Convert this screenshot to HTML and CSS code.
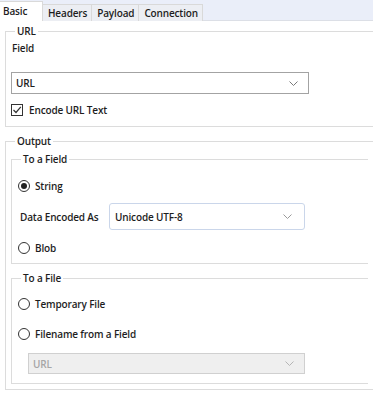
FILE: index.html
```html
<!DOCTYPE html>
<html lang="en">
<head>
    <meta charset="UTF-8">
    <title>Download Tool - Basic</title>
    <link rel="stylesheet" href="styles.css">
</head>
<body>
    <!-- Tabs -->
    <div class="tabs">
        <div class="tab active">Basic</div>
        <div class="tab">Headers</div>
        <div class="tab">Payload</div>
        <div class="tab">Connection</div>
    </div>

    <div class="panel">
        <!-- URL -->
        <fieldset class="group url-group">
            <legend>URL</legend>
            <div class="label">Field</div>
            <div class="select url-select">
                <span>URL</span>
                <svg class="chev" width="9" height="5" viewBox="0 0 9 5"><path d="M0.5 0.5 L4.5 4.5 L8.5 0.5" fill="none" stroke="#7a7a7a" stroke-width="1"/></svg>
            </div>
            <div class="check-row">
                <span class="checkbox">
                    <svg width="10" height="10" viewBox="0 0 10 10"><path d="M1.5 5 L4 7.5 L8.8 1.8" fill="none" stroke="#333" stroke-width="1.2"/></svg>
                </span>
                <span>Encode URL Text</span>
            </div>
        </fieldset>

        <!-- Output -->
        <fieldset class="group output-group">
            <legend>Output</legend>

            <fieldset class="group sub field-group">
                <legend>To a Field</legend>
                <div class="radio-row first"><span class="radio checked"></span>String</div>
                <div class="enc-row">
                    <span class="enc-label">Data Encoded As</span>
                    <div class="select enc-select">
                        <span>Unicode UTF-8</span>
                        <svg class="chev" width="9" height="5" viewBox="0 0 9 5"><path d="M0.5 0.5 L4.5 4.5 L8.5 0.5" fill="none" stroke="#9a9a9a" stroke-width="1"/></svg>
                    </div>
                </div>
                <div class="radio-row blob"><span class="radio"></span>Blob</div>
            </fieldset>

            <fieldset class="group sub file-group">
                <legend>To a File</legend>
                <div class="radio-row first"><span class="radio"></span>Temporary File</div>
                <div class="radio-row second"><span class="radio"></span>Filename from a Field</div>
                <div class="select file-select disabled">
                    <span>URL</span>
                    <svg class="chev" width="9" height="5" viewBox="0 0 9 5"><path d="M0.5 0.5 L4.5 4.5 L8.5 0.5" fill="none" stroke="#b5b5b5" stroke-width="1"/></svg>
                </div>
            </fieldset>
        </fieldset>
    </div>
</body>
</html>
```

FILE: styles.css
```css
/* Base */
html, body {
    margin: 0;
    padding: 0;
    overflow: hidden;
    background: #fff;
}

body {
    font-family: "Open Sans", "Noto Sans", sans-serif;
    font-weight: 600;
    font-size: 10px;
    letter-spacing: -0.15px;
    color: #1e1e1e;
    width: 373px;
    height: 400px;
}

/* Tabs */
.tabs {
    display: flex;
    align-items: flex-end;
    height: 21px;
    box-sizing: border-box;
    background-color: #eaeef9;
    border-bottom: 1px solid #dcdfe6;
}

.tab {
    height: 17px;
    line-height: 16px;
    box-sizing: border-box;
    padding: 0 4px 0 5px;
    margin-bottom: -1px;
    border: 1px solid #d9d9d9;
    border-bottom: none;
    border-left: none;
    background-color: #eceef3;
}

.tab.active {
    width: 43px;
    height: 20px;
    line-height: 18px;
    padding: 0 0 0 3px;
    background-color: #fff;
}

/* Panel and groups */
.panel {
    padding: 3px 0 0 5px;
}

.group {
    margin: 0;
    padding: 0 5px;
    border: 1px solid #dcdcdc;
    border-right: none;
    min-width: 0;
}

.group legend {
    padding: 0 2px;
    margin-left: 4px;
    line-height: 14px;
}

.url-group {
    padding-bottom: 9px;
}

.label {
    margin-top: 3px;
    line-height: 14px;
    padding-left: 1px;
}

.select {
    display: flex;
    align-items: center;
    justify-content: space-between;
    box-sizing: border-box;
    border: 1px solid #a3a3a3;
    background: #fff;
    padding: 0 10px 0 4px;
}

.url-select {
    width: 298px;
    height: 22px;
    margin-top: 17px;
}

.check-row {
    display: flex;
    align-items: center;
    height: 14px;
    margin-top: 9px;
}

.checkbox {
    width: 12px;
    height: 12px;
    box-sizing: border-box;
    border: 1px solid #333;
    display: flex;
    align-items: center;
    justify-content: center;
    margin-right: 6px;
}

/* Output */
.output-group {
    margin-top: 7px;
    padding-bottom: 5px;
}

.sub {
    padding: 0 5px 9px;
}

.field-group {
    margin-top: 4px;
    padding-bottom: 8px;
}

.file-group {
    margin-top: 7px;
}

.radio-row {
    display: flex;
    align-items: center;
    height: 14px;
    padding-left: 1px;
}

.field-group .first {
    margin-top: 13px;
}

.blob {
    margin-top: 11px;
}

.file-group .first {
    margin-top: 12px;
}

.file-group .second {
    margin-top: 16px;
}

.radio {
    width: 12px;
    height: 12px;
    box-sizing: border-box;
    border: 1px solid #333;
    border-radius: 50%;
    margin-right: 5px;
    position: relative;
}

.radio.checked::after {
    content: "";
    position: absolute;
    left: 2px;
    top: 2px;
    width: 6px;
    height: 6px;
    border-radius: 50%;
    background: #222;
}

.enc-row {
    display: flex;
    align-items: center;
    margin-top: 10px;
    padding-left: 3px;
}

.enc-label {
    width: 89px;
}

.enc-select {
    width: 196px;
    height: 27px;
    border: 1px solid #cad6ea;
    border-radius: 3px;
    padding-left: 5px;
    padding-right: 12px;
}

.file-select {
    width: 277px;
    height: 21px;
    margin: 12px 0 0 11px;
}

.select.disabled {
    background: #efefef;
    border-color: #d0d0d0;
    color: #a6a6a6;
}
```
